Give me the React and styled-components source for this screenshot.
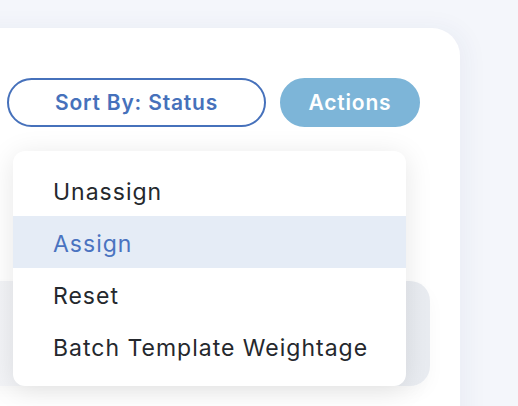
import styled, { createGlobalStyle } from "styled-components";

const GlobalStyle = createGlobalStyle`
  html, body {
    margin: 0;
    padding: 0;
    background: #f4f6fb;
    font-family: "Inter", "Liberation Sans", sans-serif;
    overflow: hidden;
  }
`;

const Page = styled.div`
  position: relative;
  width: 518px;
  height: 406px;
  padding-top: 28px;
  box-sizing: border-box;
  overflow: hidden;
`;

const Card = styled.div`
  margin-left: -40px;
  width: 500px;
  height: 420px;
  background: #ffffff;
  border-top-right-radius: 28px;
  box-shadow: 6px 0 24px rgba(40, 60, 120, 0.05);
  padding: 50px 0 0 47px;
  box-sizing: border-box;
`;

const Toolbar = styled.div`
  display: flex;
  gap: 14px;
`;

const PillButton = styled.button`
  height: 49px;
  width: ${(p) => p.$width}px;
  padding: 0;
  border-radius: 25px;
  font-family: inherit;
  font-size: 21px;
  font-weight: 600;
  letter-spacing: 0.8px;
  cursor: pointer;
  border: 2px solid ${(p) => (p.$filled ? "#7db5d8" : "#4671bb")};
  background: ${(p) => (p.$filled ? "#7db5d8" : "#ffffff")};
  color: ${(p) => (p.$filled ? "#ffffff" : "#4671bb")};
`;

const TablePanel = styled.div`
  margin-top: 154px;
  margin-left: -47px;
  width: 470px;
  height: 105px;
  background: linear-gradient(90deg, #f3f4f7 0%, #e9ecf1 100%);
  border-radius: 0 20px 20px 0;
  box-shadow: 0 8px 18px rgba(0, 0, 0, 0.03);
`;

const Menu = styled.ul`
  position: absolute;
  left: 13px;
  top: 151px;
  width: 393px;
  margin: 0;
  padding: 13px 0 14px;
  list-style: none;
  background: #ffffff;
  border-radius: 12px;
  box-shadow: 0 4px 28px rgba(0, 0, 0, 0.1);
  box-sizing: border-box;
`;

const MenuItem = styled.li`
  height: 52px;
  display: flex;
  align-items: center;
  padding: 3px 0 0 40px;
  box-sizing: border-box;
  font-size: 23px;
  letter-spacing: 1px;
  color: ${(p) => (p.$active ? "#4a73c0" : "#25282d")};
  background: ${(p) => (p.$active ? "#e5ecf6" : "transparent")};
`;

const items = ["Unassign", "Assign", "Reset", "Batch Template Weightage"];

export default function App() {
  return (
    <>
      <GlobalStyle />
      <Page>
        <Card>
          <Toolbar>
            <PillButton $width={259}>Sort By: Status</PillButton>
            <PillButton $width={140} $filled>
              Actions
            </PillButton>
          </Toolbar>
          <TablePanel />
        </Card>
        <Menu>
          {items.map((item) => (
            <MenuItem key={item} $active={item === "Assign"}>
              {item}
            </MenuItem>
          ))}
        </Menu>
      </Page>
    </>
  );
}
